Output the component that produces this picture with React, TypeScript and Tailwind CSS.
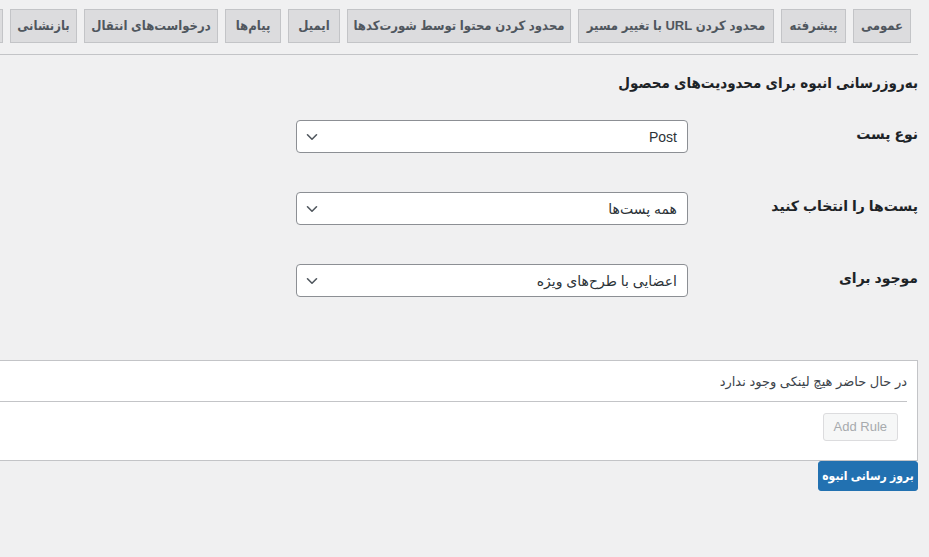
import React from 'react'

const FONT = "font-['Liberation_Sans','DejaVu_Sans',sans-serif]"
const COND = "font-['Liberation_Sans','DejaVu_Sans_Condensed','DejaVu_Sans',sans-serif]"

const TABS: { label: string; w: string }[] = [
  { label: 'عمومی',                           w: 'w-[58px]'  },
  { label: 'پیشرفته',                         w: 'w-[65px]'  },
  { label: 'محدود کردن URL با تغییر مسیر',     w: 'w-[196px]' },
  { label: 'محدود کردن محتوا توسط شورت‌کدها', w: 'w-[224px]' },
  { label: 'ایمیل',                           w: 'w-[52px]'  },
  { label: 'پیام‌ها',                          w: 'w-[56px]'  },
  { label: 'درخواست‌های انتقال',               w: 'w-[134px]' },
  { label: 'بازنشانی',                        w: 'w-[67px]'  },
  { label: 'درون‌ریزی و برون‌ریزی',            w: 'w-[150px]' },
]

const ROWS = [
  { label: 'نوع پست',               value: 'Post' },
  { label: 'پست‌ها را انتخاب کنید', value: 'همه پست‌ها' },
  { label: 'موجود برای',            value: 'اعضایی با طرح‌های ویژه' },
]

function Chevron() {
  return (
    <svg width="12" height="8" viewBox="0 0 12 8" fill="none" className="shrink-0">
      <path d="M1.5 1.8 6 6.2l4.5-4.4" stroke="#50575e" strokeWidth="1.6" strokeLinecap="round" strokeLinejoin="round" />
    </svg>
  )
}

function FakeSelect({ value }: { value: string }) {
  return (
    <div className="w-[392px] h-[33px] bg-white border border-[#8c8f94] rounded-[4px] flex items-center justify-between pr-[10px] pl-[9px]">
      <span className="text-[14px] text-[#2c3338] leading-none">{value}</span>
      <Chevron />
    </div>
  )
}

export default function App() {
  return (
    <div dir="rtl" className={`${FONT} w-full h-[557px] bg-[#f0f0f1] overflow-hidden pr-[11px]`}>
      <div className="w-[1200px]">

        {/* Tabs */}
        <div className={`${COND} flex gap-[7px] pt-[9px] pb-[11px] pr-[7px] border-b border-[#c3c4c7] whitespace-nowrap`}>
          {TABS.map(t => (
            <div key={t.label}
              className={`${t.w} h-[34px] shrink-0 flex items-center justify-center bg-[#dcdcde] border border-[#c3c4c7] text-[13px] font-bold text-[#50575e]`}>
              {t.label}
            </div>
          ))}
        </div>

        {/* Heading */}
        <h2 className={`${COND} mt-[17px] text-[15px] font-bold text-[#1d2327] leading-[22px]`}>
          به‌روزرسانی انبوه برای محدودیت‌های محصول
        </h2>

        {/* Form */}
        <div className="mt-[26px] flex flex-col gap-[39px]">
          {ROWS.map(r => (
            <div key={r.label} className="flex items-center">
              <div className="w-[230px] shrink-0 text-[14px] font-bold text-[#1d2327] -mt-[4px]">{r.label}</div>
              <FakeSelect value={r.value} />
            </div>
          ))}
        </div>

        {/* Rules box */}
        <div className="mt-[63px] ml-[1px] bg-white border border-[#c3c4c7] pr-[10px] pt-[11px]">
          <div className="text-[13px] text-[#3c434a] pb-[9px] border-b border-[#c3c4c7]">
            در حال حاضر هیچ لینکی وجود ندارد
          </div>
          <div className="pt-[11px] pb-[19px] pr-[9px]">
            <button disabled
              className="h-[28px] px-[10px] text-[13px] text-[#a7aaad] bg-[#f6f7f7] border border-[#dcdcde] rounded-[3px]">
              Add Rule
            </button>
          </div>
        </div>

        {/* Submit */}
        <button className={`${COND} h-[30px] w-[100px] whitespace-nowrap bg-[#2271b1] text-white text-[12px] font-bold rounded-[3px] border border-[#2271b1]`}>
          بروز رسانی انبوه
        </button>
      </div>
    </div>
  )
}
